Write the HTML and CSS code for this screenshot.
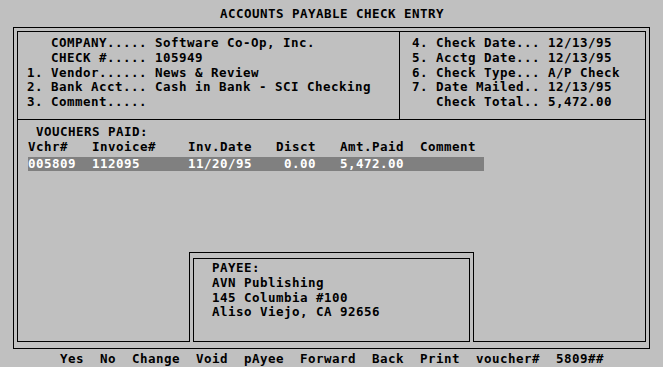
FILE: index.html
```html
<!DOCTYPE html>
<html>
<head>
<meta charset="utf-8">
<link rel="stylesheet" href="styles.css">
</head>
<body>
<div class="screen">
  <div class="title">ACCOUNTS PAYABLE CHECK ENTRY</div>
  <div class="outer">
    <div class="inner">
      <div class="top">
        <div class="left-panel">
          <div class="ln">   COMPANY..... Software Co-Op, Inc.</div>
          <div class="ln">   CHECK #..... 105949</div>
          <div class="ln">1. Vendor...... News &amp; Review</div>
          <div class="ln">2. Bank Acct... Cash in Bank - SCI Checking</div>
          <div class="ln">3. Comment.....</div>
        </div>
        <div class="right-panel">
          <div class="ln">4. Check Date... 12/13/95</div>
          <div class="ln">5. Acctg Date... 12/13/95</div>
          <div class="ln">6. Check Type... A/P Check</div>
          <div class="ln">7. Date Mailed.. 12/13/95</div>
          <div class="ln">   Check Total.. 5,472.00</div>
        </div>
      </div>
      <div class="lower">
        <div class="vouchers">
          <div class="ln"> VOUCHERS PAID:</div>
          <div class="ln">Vchr#   Invoice#    Inv.Date   Disct   Amt.Paid  Comment</div>
          <div class="row-sel">005809  112095      11/20/95    0.00   5,472.00</div>
        </div>
        <div class="payee-outer">
          <div class="payee-inner">
            <div class="ln">PAYEE:</div>
            <div class="ln">AVN Publishing</div>
            <div class="ln">145 Columbia #100</div>
            <div class="ln">Aliso Viejo, CA 92656</div>
          </div>
        </div>
      </div>
    </div>
  </div>
  <div class="menu">
    <span>Yes</span><span>No</span><span>Change</span><span>Void</span><span>pAyee</span><span>Forward</span><span>Back</span><span>Print</span><span>voucher#</span><span>5809##</span>
  </div>
</div>
</body>
</html>
```

FILE: styles.css
```css
html, body {
  margin: 0;
  padding: 0;
  background: #c0c0c0;
}

.screen {
  width: 663px;
  height: 367px;
  overflow: hidden;
  background: #c0c0c0;
  color: #000;
  font-family: "DejaVu Sans Mono", "Liberation Mono", monospace;
  font-weight: bold;
  font-size: 12.5px;
  letter-spacing: 0.474px;
  line-height: 14.7px;
}

.ln {
  white-space: pre;
  height: 14.7px;
}

.title {
  box-sizing: border-box;
  height: 27px;
  padding-top: 7.4px;
  padding-left: 220px;
  white-space: pre;
}

.outer {
  box-sizing: border-box;
  margin-left: 13px;
  width: 637px;
  height: 322px;
  border: 1px solid #000;
  padding: 3px 3px 6px 3px;
}

.inner {
  box-sizing: border-box;
  width: 629px;
  height: 311px;
  border: 1px solid #000;
  display: flex;
  flex-direction: column;
}

.top {
  box-sizing: border-box;
  height: 88px;
  border-bottom: 1px solid #000;
  display: flex;
}

.left-panel {
  box-sizing: border-box;
  width: 382px;
  border-right: 1px solid #000;
  padding: 4.4px 0 0 9px;
}

.right-panel {
  flex: 1;
  padding: 4.4px 0 0 12px;
}

.lower {
  flex: 1;
  display: flex;
  flex-direction: column;
}

.vouchers {
  padding: 5.4px 0 0 10px;
}

.row-sel {
  white-space: pre;
  margin-top: 2.2px;
  width: 456px;
  height: 14px;
  line-height: 14px;
  background: #808080;
  color: #fff;
}

.payee-outer {
  box-sizing: border-box;
  margin-top: auto;
  margin-left: 171px;
  margin-bottom: -1px;
  width: 285px;
  height: 90px;
  border: 1px solid #000;
  border-bottom: none;
  padding: 5px 3px 0 3px;
  background: #c0c0c0;
}

.payee-inner {
  box-sizing: border-box;
  width: 277px;
  height: 84px;
  border: 1px solid #000;
  padding: 2.4px 0 0 18px;
}

.menu {
  display: flex;
  gap: 16px;
  margin-top: 3.4px;
  padding-left: 60px;
  white-space: pre;
}
```
